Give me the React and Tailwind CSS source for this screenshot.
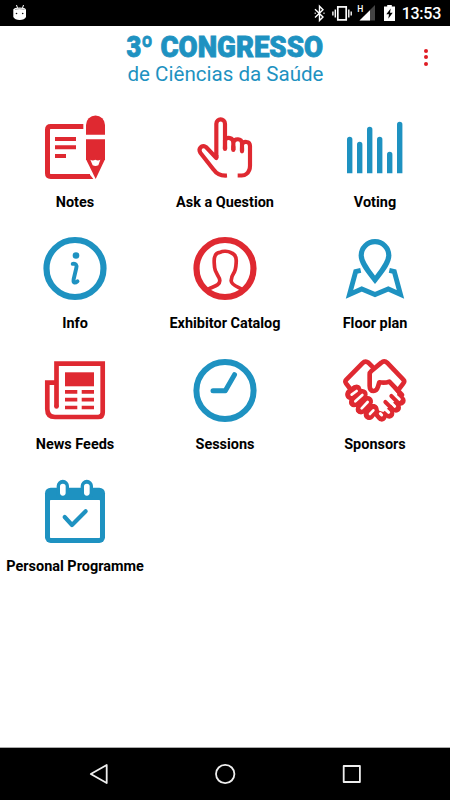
import React from "react";

const RED = "#df2931";
const BLUE = "#1e92c1";

function Icon({ children }) {
  return (
    <svg width="80" height="80" viewBox="0 0 80 80" fill="none" className="block shrink-0">
      {children}
    </svg>
  );
}

const Notes = () => (
  <Icon>
    <g transform="translate(-5 -3) scale(.33333)">
      <path d="M160 64.500H62Q52.500 64.500 52.500 74V205Q52.500 214.500 62 214.500H180" stroke={RED} strokeWidth="15" />
      <path d="M178 207L190 222H176Z" fill={RED} />
      <path d="M168 103H225V163L197 222L168 163Z" fill={RED} />
      <path d="M168 89V60A28.500 28.500 0 0 1 225 60V89Z" fill={RED} />
      <path d="M181 164Q188 169 196 164Q204 169 211 164L205 181Q196 185 188 181Z" fill="#fff" />
      <path d="M75 102H138M75 127H138M75 153H108" stroke={RED} strokeWidth="12" />
    </g>
  </Icon>
);

const Hand = () => (
  <Icon>
    <g transform="translate(-15 -3) scale(.33333)" stroke={RED} strokeWidth="12.500" strokeLinejoin="round">
      <path d="M171 211.500C151 213 139 206 131 194L91 143C84 131 94 119 108 126L139 159V56C139 39 165 39 165 56V132" strokeLinecap="butt" />
      <path d="M139 159V150M165 131V105C170 96 190 96 190 113V135M190 113C193 99 216 99 216 115V139M216 119C220 107 240 108 240 123V182Q240 198 229 207Q224 211 215 211.500H203" />
      <path d="M165 125V132M190 125V135M216 128V139" strokeLinecap="round" />
    </g>
  </Icon>
);

const Voting = () => (
  <Icon>
    <g fill={BLUE}>
      {[[12, 28.7], [22, 33.7], [32, 18.7], [42, 28.7], [52, 43.7], [62, 13.7]].map(([x, y]) => (
        <path key={x} d={`M${x} 65.300V${y + 2.7}a2.700 2.700 0 0 1 5.400 0V65.300Z`} />
      ))}
    </g>
  </Icon>
);

const Info = () => (
  <Icon>
    <circle cx="40" cy="39.500" r="28.500" stroke={BLUE} strokeWidth="6.200" />
    <circle cx="41" cy="26.500" r="3.300" fill={BLUE} />
    <path d="M37.700 34.900C41 34.300 42 36 41.300 39L38.600 50.500C38 54.300 40.200 54.200 42.500 52.200" stroke={BLUE} strokeWidth="3.900" strokeLinecap="round" />
  </Icon>
);

const Exhibitor = () => (
  <Icon>
    <circle cx="40" cy="39.500" r="28.500" stroke={RED} strokeWidth="6.200" />
    <path d="M23.500 60C28 57.500 35 56.500 34.800 51.500C34.700 47 29.800 44 29.600 38.500C29.200 33 28.500 30 30 27C31 24 33 23.500 35 23.300C38 21.700 43 22 46 23.700C50 25 51.500 29 51.200 33C51 37 51 41 48.500 44.500C46.500 47.500 46 48.500 46.200 52C46.500 56 52 57.500 56.500 60" stroke={RED} strokeWidth="3.700" />
  </Icon>
);

const Floor = () => (
  <Icon>
    <path d="M40 50.800C34 43 26.200 34 26.200 26.500A13.800 13.800 0 0 1 53.800 26.500C53.800 34 46 43 40 50.800Z" stroke={BLUE} strokeWidth="5.200" />
    <path d="M25.700 41.400L20.700 42.500L14.500 65.400L26.700 60L40 65.500L53.300 60L65.500 65.400L59.300 42.500L54.300 41.400" stroke={BLUE} strokeWidth="4.900" />
  </Icon>
);

const News = () => (
  <Icon>
    <path d="M21.500 55.500V12.700H67.700V61.500Q67.700 66 63.200 66H20Q12.300 66 12.300 58V31.700H21" stroke={RED} strokeWidth="4.700" />
    <circle cx="21.500" cy="55.500" r="2.350" fill={RED} />
    <path d="M30 21.300H59V35.300H30Z" fill={RED} />
    <path d="M30 40.800H42.300M46.700 40.800H59M30 48.700H42.300M46.700 48.700H59M30 56.500H42.300M46.700 56.500H59" stroke={RED} strokeWidth="3.700" />
  </Icon>
);

const Clock = () => (
  <Icon>
    <circle cx="40" cy="39.500" r="28.600" stroke={BLUE} strokeWidth="6" />
    <path d="M28 39.700H40.300L49.500 23.700" stroke={BLUE} strokeWidth="5" strokeLinecap="round" strokeLinejoin="round" />
  </Icon>
);

const Shake = () => (
  <Icon>
    <g transform="translate(-5 -.7) scale(.33333)" strokeLinecap="round" strokeLinejoin="round">
      <g stroke={RED} strokeWidth="30">
        <path d="M155 199L146 188M178 190L160 171M198 172L178 152M212 151L190 130" />
        <path d="M61 134L80 118M72 156L97 132M92 177L113 153M116 193L129 176" />
      </g>
      <path d="M87 112L112 138L134 161L148 181L160 185L180 167L198 148L202 130L178 101L150 101L139 128L123 124L100 104Z" fill="#fff" />
      <path d="M62 131L79 119M74 154L97 132M94 176L113 153M118 193L130 177" stroke={RED} strokeWidth="32" />
      <path d="M65 133L80 122M76 153L97 134M95 174L113 155M120 191L130 180" stroke="#fff" strokeWidth="8" />
      <path d="M155 194L151 190M176 186L160 171M194 168L178 152M208 147L190 130" stroke="#fff" strokeWidth="9" />
      <g stroke={RED} strokeWidth="14">
        <path d="M61 116L48 99Q44 93 49 88L97 39Q106 30 115 37L127 49" />
        <path d="M205 119L220 99Q225 93 220 88L172 38Q163 29 154 37L124 62Q119 66 119 72V106Q119 122 131 122Q140 122 144 109L148 96Q165 99 178 94L216 134" />
        <path d="M166 155L184 173M184 137L203 156" strokeWidth="12" />
      </g>
    </g>
  </Icon>
);

const Calendar = () => (
  <Icon>
    <g transform="translate(-35 -2) scale(.33333)">
      <rect x="135" y="53" width="180" height="166" rx="17" fill={BLUE} />
      <path d="M170 80V48A18.500 18.500 0 0 1 207 48V80ZM242 80V48A18.500 18.500 0 0 1 279 48V80Z" fill={BLUE} />
      <rect x="180" y="41" width="17" height="36" rx="8.500" fill="#fff" />
      <rect x="252" y="41" width="17" height="36" rx="8.500" fill="#fff" />
      <rect x="150" y="90" width="150" height="114" rx="2" fill="#fff" />
      <path d="M194 141L216 165L257 124" stroke={BLUE} strokeWidth="12.500" strokeLinecap="round" strokeLinejoin="round" />
    </g>
  </Icon>
);

const items = [
  ["Notes", Notes],
  ["Ask a Question", Hand],
  ["Voting", Voting],
  ["Info", Info],
  ["Exhibitor Catalog", Exhibitor],
  ["Floor plan", Floor],
  ["News Feeds", News],
  ["Sessions", Clock],
  ["Sponsors", Shake],
  ["Personal Programme", Calendar],
];

function StatusBar() {
  return (
    <header className="flex h-[26px] shrink-0 items-center justify-between bg-black pr-[9px] pl-3 text-white">
      <svg width="15" height="18" viewBox="0 0 15 18" fill="none" className="block">
        <path d="M4.500 1L5.500 4M11.500 1L10.500 4" stroke="#fff" strokeWidth="1" />
        <path d="M1.300 5.500Q2 3.500 7.700 3.500T14 5.500V13Q12.500 16 7.700 16T1.300 13Z" fill="#fff" />
        <path d="M3 5.500Q7.500 4 12.500 5.500" stroke="#aaa" strokeWidth="1" />
        <circle cx="4.500" cy="9.500" r=".8" fill="#111" />
        <circle cx="10.700" cy="9.500" r=".8" fill="#111" />
      </svg>
      <div className="flex items-center">
        <svg width="88" height="26" viewBox="312 0 88 26" fill="none" className="block">
          <path d="M315 9.300L323 17L319.500 20.500V6.300L323 9.800L315 17.500" stroke="#fff" strokeWidth="1.400" />
          <path d="M314.700 13.300h1M323.500 13.300h1" stroke="#fff" strokeWidth="1.500" />
          <rect x="337.800" y="6.900" width="8.400" height="13" stroke="#fff" strokeWidth="1.700" />
          <path d="M335.300 9.500V17.500M332.900 11.500V15.500M348.800 9.500V17.500M351.200 11.500V15.500" stroke="#fff" strokeWidth="1.400" />
          <path d="M375 5V20.500H359.500Z" fill="#444" />
          <path d="M370 10.200V20.500H359.500Z" fill="#fff" />
          <text x="357.200" y="11.800" fill="#fff" fontSize="8.500" fontWeight="500" fontFamily="Roboto, sans-serif">H</text>
          <path d="M384 6.500h3.200V5h4.600V6.500H395V21H384Z" fill="#fff" />
          <path d="M390.700 8.500L386.300 14.200H389L388.300 18.700L392.700 12.800H390Z" fill="#000" />
        </svg>
        <span className="mt-[2px] ml-[2px] text-[16px] leading-none font-medium tracking-[-0.25px]">13:53</span>
      </div>
    </header>
  );
}

export default function App() {
  return (
    <div className="flex h-[800px] w-[450px] flex-col overflow-hidden bg-white font-['Roboto',sans-serif] text-black">
      <StatusBar />
      <div className="flex h-[64px] shrink-0 items-center justify-end pr-[20px]">
        <svg width="204" height="64" viewBox="123 26 204 64" className="block overflow-visible" fontFamily="Roboto, sans-serif" fill={BLUE}>
          <text x="126.500" y="57.300" fontSize="30" fontWeight="900" stroke={BLUE} strokeWidth=".9" textLength="26.500" lengthAdjust="spacingAndGlyphs">3º</text>
          <text x="160.500" y="57.300" fontSize="30" fontWeight="900" stroke={BLUE} strokeWidth=".9" textLength="162.500" lengthAdjust="spacingAndGlyphs">CONGRESSO</text>
          <text x="127.500" y="81" fontSize="20.800" textLength="196" lengthAdjust="spacingAndGlyphs">de Ciências da Saúde</text>
        </svg>
        <div className="ml-[95px] flex w-2 flex-col items-center gap-[2.500px] pb-[2px]">
          <i className="size-1 rounded-full bg-[#df1c24]" />
          <i className="size-1 rounded-full bg-[#df1c24]" />
          <i className="size-1 rounded-full bg-[#df1c24]" />
        </div>
      </div>
      <main className="grid grow auto-rows-[121.330px] grid-cols-3 content-start pt-[18px]">
        {items.map(([label, Glyph]) => (
          <div key={label} className="flex flex-col items-center">
            <Glyph />
            <span className="mt-[4.600px] text-[14.450px] leading-5 font-bold whitespace-nowrap">{label}</span>
          </div>
        ))}
      </main>
      <nav className="h-[53px] shrink-0 border-t border-[#aaa] bg-black">
        <svg width="450" height="52" viewBox="0 748 450 52" fill="none" stroke="#eee" strokeWidth="1.800" strokeLinejoin="round" className="block">
          <path d="M90.800 774L106.700 765V783Z" />
          <circle cx="225.200" cy="774" r="9.200" />
          <rect x="343.700" y="766" width="16.200" height="16" />
        </svg>
      </nav>
    </div>
  );
}
